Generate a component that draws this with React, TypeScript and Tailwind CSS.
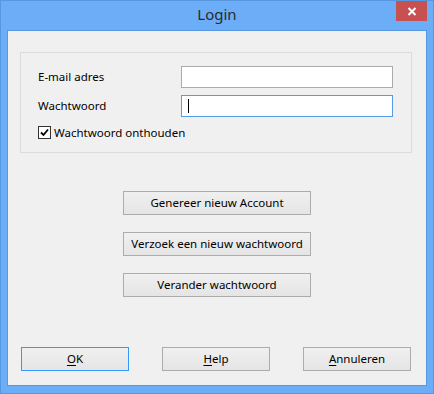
import React from "react";

const font = { fontFamily: '"Noto Sans", "Open Sans", sans-serif' };

function Btn({ children, w, def }: { children: React.ReactNode; w: string; def?: boolean }) {
  return (
    <div
      className={`${w} h-[24px] flex items-center justify-center text-[11.5px] text-black border bg-gradient-to-b from-[#f0f0f0] to-[#e5e5e5] ${
        def ? "border-[#3399ff]" : "border-[#acacac]"
      }`}
    >
      {children}
    </div>
  );
}

export default function App() {
  return (
    <div
      className="w-[434px] h-[394px] bg-[#6badf6] border border-[#5797e0] flex flex-col"
      style={font}
    >
      <div className="h-[29px] relative flex items-center justify-center">
        <span className="text-[15px] text-[#2b2b2b] leading-none mt-[-2px]">Login</span>
        <div className="absolute right-[6px] top-0 w-[31px] h-[20px] bg-[#c75050] flex items-center justify-center">
          <svg width="10" height="9" viewBox="0 0 10 9">
            <path d="M1.5 1 L8.5 8 M8.5 1 L1.5 8" stroke="white" strokeWidth="2" />
          </svg>
        </div>
      </div>
      <div className="ml-[6px] w-[420px] h-[356px] border border-[#5797e0] bg-[#f0f0f0] flex flex-col">
        <div className="mt-[21px] ml-[12px] w-[392px] h-[101px] border border-[#dcdcdc] flex flex-col">
          <div className="mt-[13px] flex items-center h-[22px]">
            <span className="ml-[17px] w-[143px] text-[11.5px] text-black">E-mail adres</span>
            <div className="w-[212px] h-[22px] bg-white border border-[#ababab]" />
          </div>
          <div className="mt-[7px] flex items-center h-[22px]">
            <span className="ml-[17px] w-[143px] text-[11.5px] text-black">Wachtwoord</span>
            <div className="w-[212px] h-[22px] bg-white border border-[#569de5] flex items-center">
              <div className="ml-[6px] w-[1px] h-[14px] bg-black" />
            </div>
          </div>
          <div className="mt-[9px] flex items-center h-[13px]">
            <div className="ml-[17px] w-[13px] h-[13px] bg-white border border-[#333333] flex items-center justify-center">
              <svg width="9" height="9" viewBox="0 0 9 9">
                <path d="M1 4.5 L3.5 7 L8 1.5" stroke="black" strokeWidth="1.8" fill="none" />
              </svg>
            </div>
            <span className="ml-[3px] text-[11.5px] text-black">Wachtwoord onthouden</span>
          </div>
        </div>
        <div className="mt-[38px] ml-[115px] flex flex-col gap-[17px]">
          <Btn w="w-[188px]">Genereer nieuw Account</Btn>
          <Btn w="w-[188px]">Verzoek een nieuw wachtwoord</Btn>
          <Btn w="w-[188px]">Verander wachtwoord</Btn>
        </div>
        <div className="mt-[50px] ml-[13px] flex gap-[33px]">
          <Btn w="w-[108px]" def>
            <span><span className="underline underline-offset-2">O</span>K</span>
          </Btn>
          <Btn w="w-[108px]">
            <span><span className="underline underline-offset-2">H</span>elp</span>
          </Btn>
          <Btn w="w-[108px]">
            <span><span className="underline underline-offset-2">A</span>nnuleren</span>
          </Btn>
        </div>
      </div>
    </div>
  );
}
